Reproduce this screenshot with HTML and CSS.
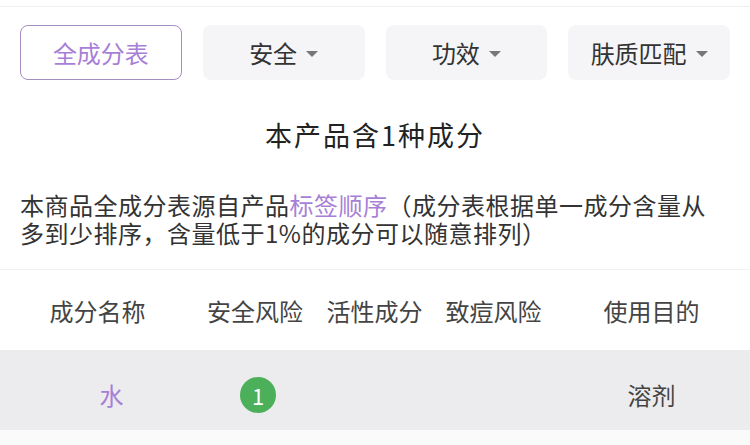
FILE: index.html
```html
<!DOCTYPE html>
<html lang="zh">
<head>
<meta charset="utf-8">
<link rel="stylesheet" href="styles.css">
</head>
<body>
<div class="topbar"></div>
<div class="tabs">
  <div class="tab active">全成分表</div>
  <div class="tab">安全<span class="caret"></span></div>
  <div class="tab">功效<span class="caret"></span></div>
  <div class="tab">肤质匹配<span class="caret"></span></div>
</div>
<h1 class="title">本产品含1种成分</h1>
<p class="desc">本商品全成分表源自产品<span class="link">标签顺序</span>（成分表根据单一成分含量从多到少排序，含量低于1%的成分可以随意排列）</p>
<div class="table">
  <div class="row head">
    <div class="c c1">成分名称</div>
    <div class="c c2">安全风险</div>
    <div class="c c3">活性成分</div>
    <div class="c c4">致痘风险</div>
    <div class="c c5">使用目的</div>
  </div>
  <div class="row item">
    <div class="c c1"><span class="name">水</span></div>
    <div class="c c2"><span class="badge">1</span></div>
    <div class="c c3"></div>
    <div class="c c4"></div>
    <div class="c c5">溶剂</div>
  </div>
</div>
<div class="rest"></div>
</body>
</html>
```
FILE: styles.css
```css
* { box-sizing: border-box; }
html, body { margin: 0; padding: 0; }
body {
  width: 750px;
  height: 445px;
  overflow: hidden;
  background: #fff;
  font-family: "Noto Sans CJK SC", "Noto Sans", sans-serif;
  color: #333;
}
.topbar {
  height: 7px;
  border-bottom: 1px solid #efeff1;
}
.tabs {
  display: flex;
  gap: 21px;
  padding: 18px 20px 0 20px;
}
.tab {
  width: 162px;
  height: 55px;
  border-radius: 8px;
  background: #f5f5f7;
  display: flex;
  align-items: center;
  justify-content: center;
  font-size: 24px;
  color: #333;
}
.tab.active {
  background: #fff;
  border: 1px solid #a58ec0;
  color: #a77fd6;
}
.caret {
  width: 0;
  height: 0;
  border-left: 6px solid transparent;
  border-right: 6px solid transparent;
  border-top: 6px solid #777;
  margin-left: 9px;
  margin-top: 2px;
}
.title {
  margin: 0;
  padding-top: 36px;
  height: 111px;
  text-align: center;
  font-size: 27px;
  letter-spacing: 2px;
  font-weight: normal;
  color: #222;
  line-height: 38px;
}
.desc {
  margin: 0;
  padding: 0 20px 0 20px;
  font-size: 24px;
  letter-spacing: 0.5px;
  line-height: 28px;
  height: 78px;
  color: #333;
}
.link { color: #a77fd6; }
.table { border-top: 1px solid #f2f1f4; }
.row {
  display: flex;
  height: 80px;
  align-items: center;
}
.row.item { background: #ececee; padding-top: 9px; }
.c {
  text-align: center;
  font-size: 24px;
  color: #444;
}
.c1 { width: 195px; }
.c2 { width: 120px; }
.c3 { width: 119px; }
.c4 { width: 119px; }
.c5 { width: 197px; }
.name { color: #a77fd6; margin-left: 28px; }
.badge {
  display: inline-flex;
  align-items: center;
  justify-content: center;
  width: 36px;
  height: 36px;
  border-radius: 50%;
  background: #4caf59;
  color: #fff;
  font-size: 22px;
  margin-left: 6px;
}
.rest { height: 20px; background: #fafafa; }
```
